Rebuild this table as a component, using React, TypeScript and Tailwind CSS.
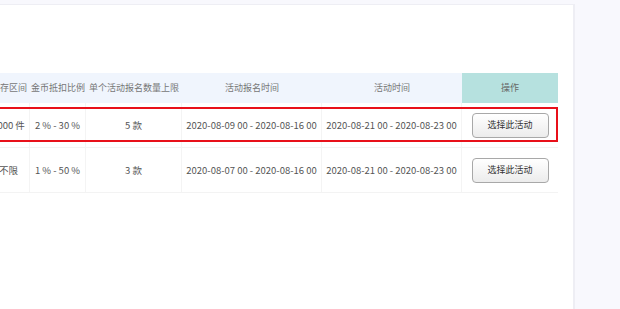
import React from 'react';

const cols = [
  { title: '库存区间', w: 'w-[42px]' },
  { title: '金币抵扣比例', w: 'w-[56px]' },
  { title: '单个活动报名数量上限', w: 'w-[96px]' },
  { title: '活动报名时间', w: 'w-[140px]' },
  { title: '活动时间', w: 'w-[140px]' },
];

const rows = [
  {
    stock: '1000 件',
    ratio: '2 % - 30 %',
    limit: '5 款',
    signup: '2020-08-09 00 - 2020-08-16 00',
    period: '2020-08-21 00 - 2020-08-23 00',
    marked: true,
  },
  {
    stock: '不限',
    ratio: '1 % - 50 %',
    limit: '3 款',
    signup: '2020-08-07 00 - 2020-08-16 00',
    period: '2020-08-21 00 - 2020-08-23 00',
    marked: false,
  },
];

const App = () => {
  return (
    <div
      className="flex h-[309px] w-[620px] overflow-hidden bg-[#f8f8fd]"
      style={{ fontFamily: '"Noto Sans CJK SC", "Liberation Sans", sans-serif' }}
    >
      <div className="mt-[4px] flex w-[575px] flex-col overflow-hidden border-r-2 border-t border-[#eeeef4] bg-white">
        <div className="h-[68px]" />

        <div className="-ml-[12px] w-[570px]">
          {/* header */}
          <div className="flex h-[30px] items-center bg-[#f0f5fd] text-[9px] text-[#777]">
            {cols.map((c) => (
              <div key={c.title} className={`${c.w} flex h-full items-center justify-center whitespace-nowrap`}>
                {c.title}
              </div>
            ))}
            <div className="flex h-full w-[96px] items-center justify-center bg-[#b6e1df] text-[#666]">操作</div>
          </div>

          {/* body */}
          {rows.map((r, i) => (
            <div key={i} className="relative flex h-[45px] items-center border-b border-[#f3f3f3] text-[9.5px] text-[#555]">
              <div className="flex h-full w-[42px] items-center justify-center whitespace-nowrap border-r border-[#f4f4f4]">{r.stock}</div>
              <div className="flex h-full w-[56px] items-center justify-center whitespace-nowrap border-r border-[#f4f4f4]">{r.ratio}</div>
              <div className="flex h-full w-[96px] items-center justify-center whitespace-nowrap border-r border-[#f4f4f4]">{r.limit}</div>
              <div className="flex h-full w-[140px] items-center justify-center whitespace-nowrap border-r border-[#f4f4f4]">{r.signup}</div>
              <div className="flex h-full w-[140px] items-center justify-center whitespace-nowrap border-r border-[#f4f4f4]">{r.period}</div>
              <div className="flex h-full w-[96px] items-center justify-center">
                <button className="h-[25px] w-[77px] rounded-[4px] border border-[#a8a8a8] bg-gradient-to-b from-white to-[#ececec] text-[9px] text-[#333]">
                  选择此活动
                </button>
              </div>
              {r.marked && (
                <div className="pointer-events-none absolute inset-x-0 top-[4px] bottom-[5px] border-2 border-[#e8101a]" />
              )}
            </div>
          ))}
        </div>
      </div>
    </div>
  );
};

export default App;
